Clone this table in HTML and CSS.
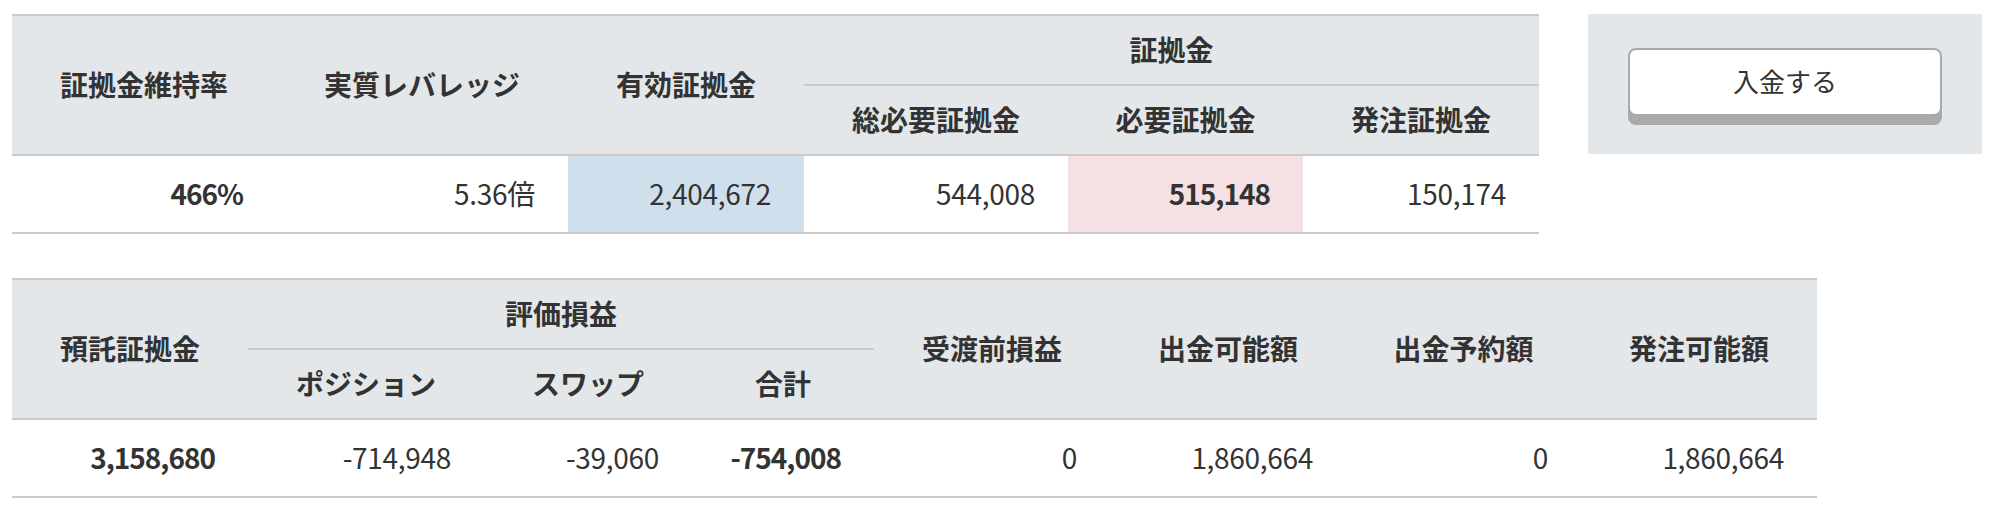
FILE: index.html
```html
<!DOCTYPE html>
<html lang="ja">
<head>
<meta charset="utf-8">
<title>口座状況</title>
<link rel="stylesheet" href="styles.css">
</head>
<body>
<div class="page">
  <div class="top-row">
    <table class="summary t1">
      <colgroup>
        <col class="w264"><col class="w292"><col class="w236"><col class="w264"><col class="w235"><col class="w236">
      </colgroup>
      <thead>
        <tr>
          <th rowspan="2" class="full">証拠金維持率</th>
          <th rowspan="2" class="full">実質レバレッジ</th>
          <th rowspan="2" class="full">有効証拠金</th>
          <th colspan="3" class="group">証拠金</th>
        </tr>
        <tr>
          <th class="sub">総必要証拠金</th>
          <th class="sub">必要証拠金</th>
          <th class="sub">発注証拠金</th>
        </tr>
      </thead>
      <tbody>
        <tr>
          <td class="bold">466%</td>
          <td>5.36倍</td>
          <td class="blue">2,404,672</td>
          <td>544,008</td>
          <td class="pink bold">515,148</td>
          <td>150,174</td>
        </tr>
      </tbody>
    </table>
    <div class="deposit-panel">
      <button class="deposit-btn" type="button">入金する</button>
    </div>
  </div>

  <table class="summary t2">
    <colgroup>
      <col class="w236"><col class="w236"><col class="w208"><col class="w182"><col class="w236"><col class="w236"><col class="w235"><col class="w236">
    </colgroup>
    <thead>
      <tr>
        <th rowspan="2" class="full">預託証拠金</th>
        <th colspan="3" class="group">評価損益</th>
        <th rowspan="2" class="full">受渡前損益</th>
        <th rowspan="2" class="full">出金可能額</th>
        <th rowspan="2" class="full">出金予約額</th>
        <th rowspan="2" class="full">発注可能額</th>
      </tr>
      <tr>
        <th class="sub">ポジション</th>
        <th class="sub">スワップ</th>
        <th class="sub">合計</th>
      </tr>
    </thead>
    <tbody>
      <tr>
        <td class="bold">3,158,680</td>
        <td>-714,948</td>
        <td>-39,060</td>
        <td class="bold">-754,008</td>
        <td>0</td>
        <td>1,860,664</td>
        <td>0</td>
        <td>1,860,664</td>
      </tr>
    </tbody>
  </table>
</div>
</body>
</html>
```

FILE: styles.css
```css
html, body {
  margin: 0;
  padding: 0;
  background: #ffffff;
}

body {
  font-family: "Noto Sans CJK JP", "Noto Sans", sans-serif;
  color: #333333;
}

.page {
  padding: 14px 12px;
  display: flex;
  flex-direction: column;
  gap: 44px;
}

.top-row {
  display: flex;
  align-items: flex-start;
  gap: 49px;
}

.summary {
  border-collapse: separate;
  border-spacing: 0;
  table-layout: fixed;
  border-top: 2px solid #cacaca;
}

.t1 { width: 1527px; }
.t2 { width: 1805px; }

.w182 { width: 182px; }
.w208 { width: 208px; }
.w235 { width: 235px; }
.w236 { width: 236px; }
.w264 { width: 264px; }
.w292 { width: 292px; }

.summary th {
  background: #e4e7ea;
  font-size: 28px;
  font-weight: 700;
  line-height: 34px;
  text-align: center;
  padding: 0 0 3px;
  height: 65px;
  border-bottom: 2px solid #cacaca;
  white-space: nowrap;
}

.summary td {
  font-size: 28px;
  font-weight: 400;
  line-height: 34px;
  letter-spacing: -0.3px;
  text-align: right;
  padding: 0 33px 3px 0;
  height: 73px;
  border-bottom: 2px solid #cacaca;
  white-space: nowrap;
}

.summary td.bold {
  font-weight: 700;
  letter-spacing: -1px;
}

.summary td.blue {
  background: #cfe0ec;
}

.summary td.pink {
  background: #f5e1e4;
}

.deposit-panel {
  width: 394px;
  height: 140px;
  box-sizing: border-box;
  background: #e4e7ea;
  padding: 34px 40px 0;
}

.deposit-btn {
  display: block;
  width: 100%;
  height: 68px;
  box-sizing: border-box;
  background: #ffffff;
  border: 2px solid #aaaaaa;
  border-radius: 8px;
  box-shadow: 0 9px 0 #aaaaaa;
  font-family: "Noto Sans CJK JP", "Noto Sans", sans-serif;
  font-size: 26px;
  font-weight: 400;
  color: #333333;
  padding: 0 0 3px;
  cursor: pointer;
}
```
